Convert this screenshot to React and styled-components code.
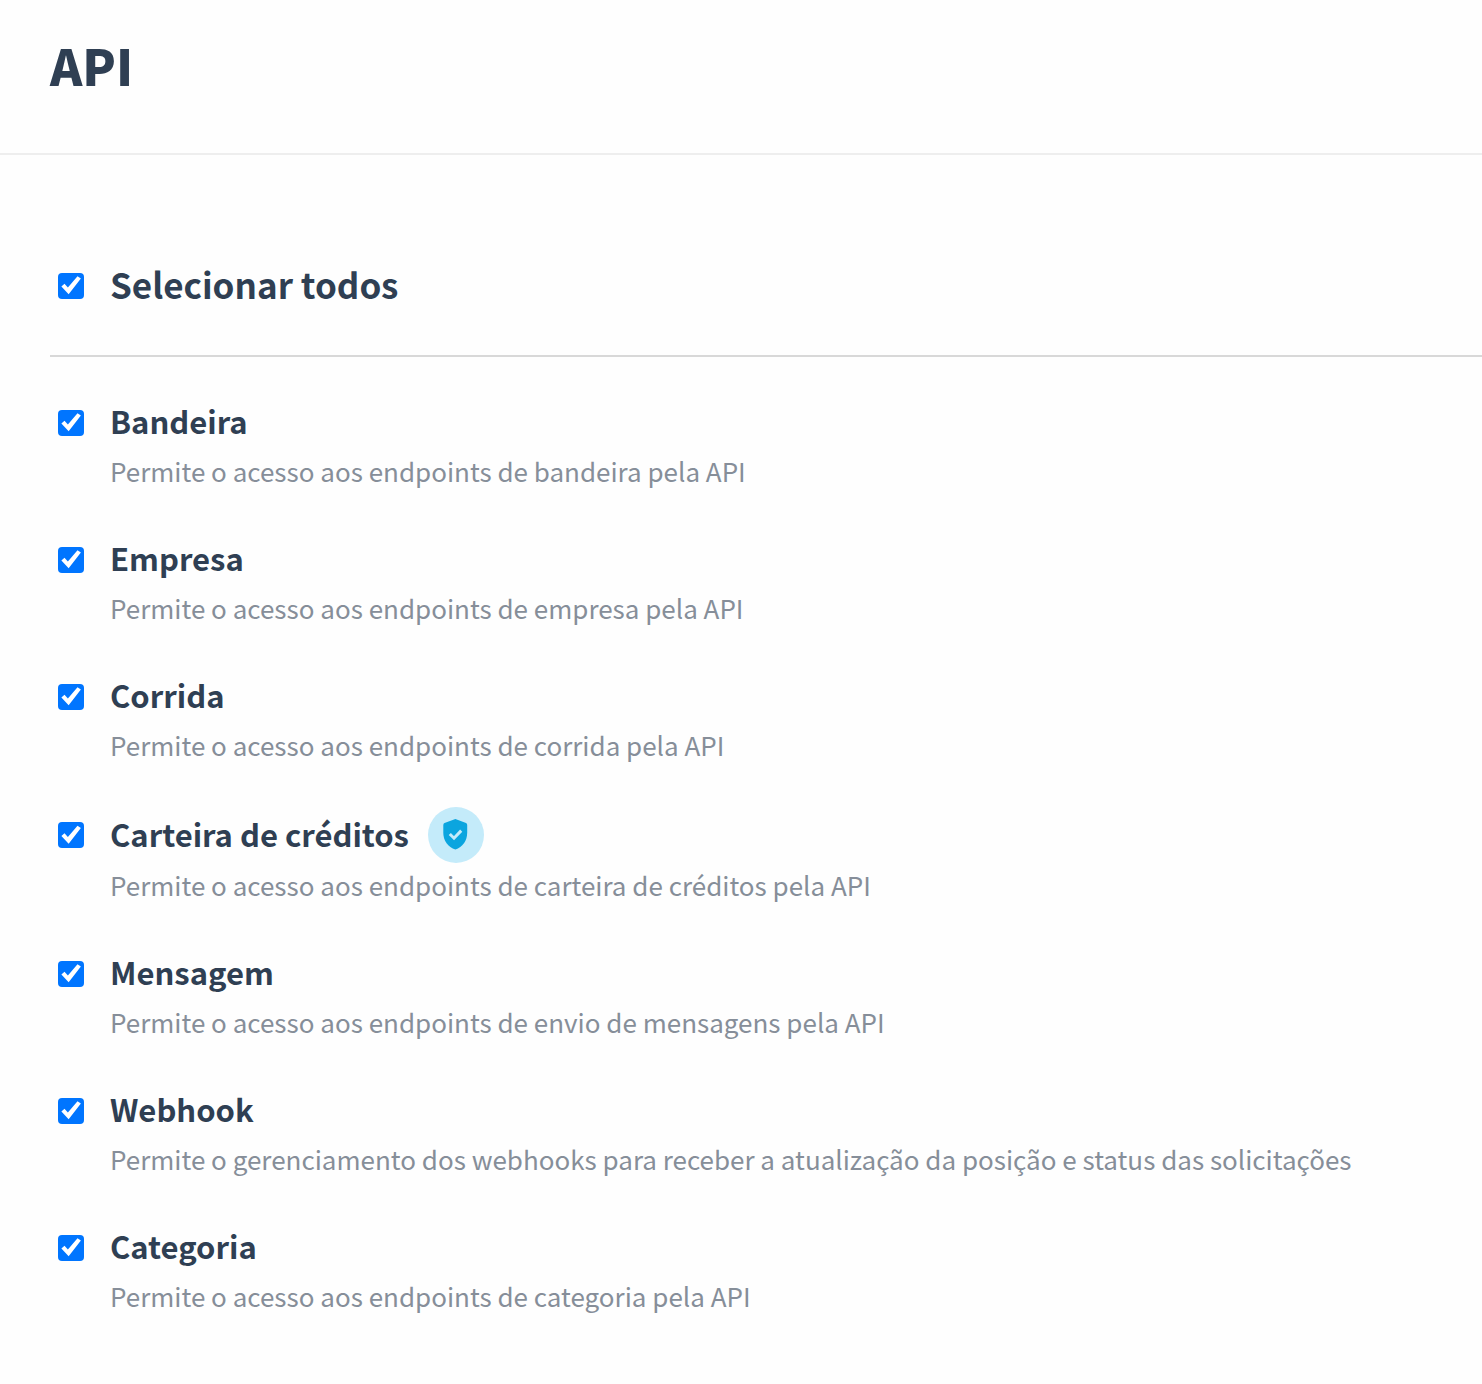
import React, { useState } from "react";
import styled, { createGlobalStyle } from "styled-components";

const GlobalStyle = createGlobalStyle`
  * {
    box-sizing: border-box;
  }
  body {
    margin: 0;
    background: #fefefe;
    color: #2f3f53;
    font-family: "Source Sans Pro", "Noto Sans CJK SC", "Noto Sans", sans-serif;
  }
`;

const Header = styled.header`
  padding: 29px 50px 52px;
  border-bottom: 2px solid #eeeeee;
  h1 {
    margin: 0;
    font-size: 49px;
    line-height: 72px;
    font-weight: 900;
  }
`;

const Content = styled.main`
  padding: 104px 0 32px 50px;
`;

const SelectAll = styled.div`
  padding-bottom: 43px;
  border-bottom: 2px solid #d8d8d8;
`;

const List = styled.ul`
  list-style: none;
  margin: 0;
  padding: 39px 0 0;
`;

const Item = styled.li`
  padding-bottom: 40px;
`;

const Line = styled.div`
  display: flex;
  align-items: center;
  min-height: 53px;
  padding-left: 8px;
`;

const Checkbox = styled.input`
  appearance: none;
  flex: none;
  width: 26px;
  height: 26px;
  margin: 0 26px 0 0;
  border: 2px solid #767676;
  border-radius: 4px;
  background: #fff;
  cursor: pointer;
  &:checked {
    border: 0;
    background: #0075ff;
  }
  &:checked::after {
    content: "";
    display: block;
    width: 26px;
    height: 26px;
    background: #fff;
    clip-path: polygon(13% 54%, 25% 43%, 38% 58%, 75% 14%, 88% 23%, 41% 84%);
  }
`;

const Name = styled.label`
  padding-bottom: 3px;
  font-size: ${(props) => (props.$large ? "35px" : "31px")};
  line-height: 50px;
  font-weight: 600;
  cursor: pointer;
`;

const Description = styled.p`
  margin: 0;
  padding-left: 60px;
  font-size: 26px;
  line-height: 44px;
  color: #868e99;
`;

const Badge = styled.span`
  display: flex;
  align-items: center;
  justify-content: center;
  width: 56px;
  height: 56px;
  margin-left: 19px;
  border-radius: 50%;
  background: #c4ebfa;
`;

const ShieldIcon = () => (
  <svg width="56" height="56" viewBox="0 0 56 56" aria-hidden="true">
    <path
      d="M27.4 12 L38 16 Q39.2 16.5 39.2 18 V25.5 C39.2 34 34.5 40 27.4 42.5 C20 40 15.3 34 15.3 25.5 V18 Q15.3 16.5 16.5 16 Z"
      fill="#0ba5df"
    />
    <path d="M21.8 27 L26 31.2 L33.2 23.6" fill="none" stroke="#c4ebfa" strokeWidth="3" />
  </svg>
);

const permissions = [
  { id: "bandeira", name: "Bandeira", text: "Permite o acesso aos endpoints de bandeira pela API" },
  { id: "empresa", name: "Empresa", text: "Permite o acesso aos endpoints de empresa pela API" },
  { id: "corrida", name: "Corrida", text: "Permite o acesso aos endpoints de corrida pela API" },
  {
    id: "carteira",
    name: "Carteira de créditos",
    text: "Permite o acesso aos endpoints de carteira de créditos pela API",
    secure: true,
  },
  { id: "mensagem", name: "Mensagem", text: "Permite o acesso aos endpoints de envio de mensagens pela API" },
  {
    id: "webhook",
    name: "Webhook",
    text: "Permite o gerenciamento dos webhooks para receber a atualização da posição e status das solicitações",
  },
  { id: "categoria", name: "Categoria", text: "Permite o acesso aos endpoints de categoria pela API" },
];

const App = () => {
  const [selected, setSelected] = useState(permissions.map((p) => p.id));
  const allSelected = selected.length === permissions.length;

  const toggleAll = () => {
    setSelected(allSelected ? [] : permissions.map((p) => p.id));
  };

  const toggle = (id) => {
    setSelected(selected.includes(id) ? selected.filter((s) => s !== id) : [...selected, id]);
  };

  return (
    <>
      <GlobalStyle />
      <Header>
        <h1>API</h1>
      </Header>
      <Content>
        <SelectAll>
          <Line>
            <Checkbox type="checkbox" id="todos" checked={allSelected} onChange={toggleAll} />
            <Name htmlFor="todos" $large>Selecionar todos</Name>
          </Line>
        </SelectAll>
        <List>
          {permissions.map((p) => (
            <Item key={p.id}>
              <Line>
                <Checkbox
                  type="checkbox"
                  id={p.id}
                  checked={selected.includes(p.id)}
                  onChange={() => toggle(p.id)}
                />
                <Name htmlFor={p.id}>{p.name}</Name>
                {p.secure && (
                  <Badge>
                    <ShieldIcon />
                  </Badge>
                )}
              </Line>
              <Description>{p.text}</Description>
            </Item>
          ))}
        </List>
      </Content>
    </>
  );
};

export default App;
